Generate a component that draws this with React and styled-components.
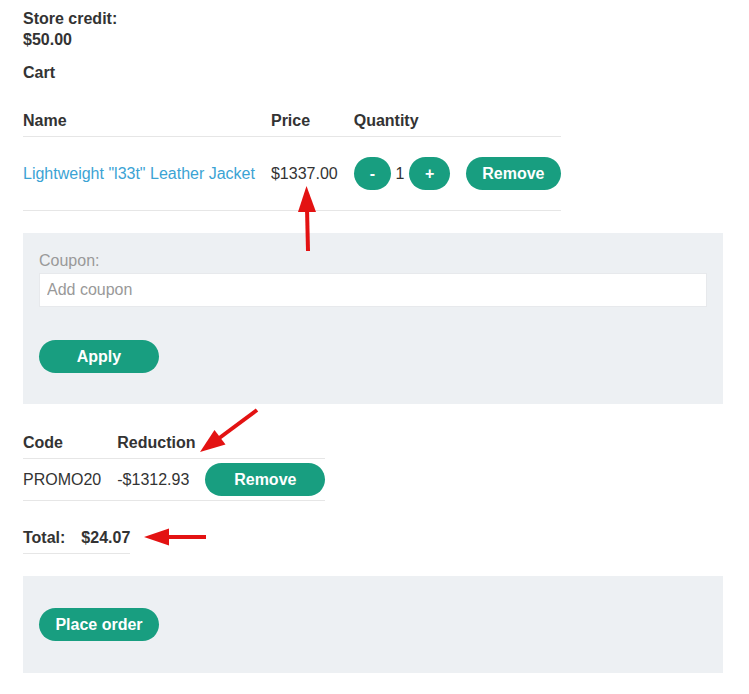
import styled, { createGlobalStyle } from "styled-components";

const GlobalStyle = createGlobalStyle`
    body {
        margin: 0;
        background: #ffffff;
        font-family: "Liberation Sans", Arial, sans-serif;
        font-size: 16px;
        color: #333333;
    }
`;

const Page = styled.div`
    position: relative;
    padding: 8px 26px 22px 23px;
    line-height: 21px;
`;

const Credit = styled.div`
    font-weight: 700;
`;

const Heading = styled.div`
    margin-top: 12px;
    font-weight: 700;
`;

const Table = styled.table`
    border-collapse: collapse;
    margin-top: ${(p) => p.$top || 19}px;
`;

const Th = styled.th`
    padding: 8px 8px 5px 0;
    text-align: left;
    font-weight: 700;
    white-space: nowrap;

    &:last-child {
        padding-right: 0;
    }
`;

const Tr = styled.tr`
    border-bottom: 1px solid #e6e6e6;
`;

const Td = styled.td`
    padding: ${(p) => p.$pad || 5}px 16px ${(p) => p.$pad || 5}px 0;
    vertical-align: middle;
    white-space: nowrap;
    font-weight: ${(p) => (p.$bold ? 700 : 400)};

    &:last-child {
        padding-right: 0;
    }
`;

const ProductLink = styled.a`
    color: #3ba3d4;
    text-decoration: none;
`;

const Button = styled.button`
    display: inline-flex;
    align-items: center;
    justify-content: center;
    vertical-align: middle;
    height: 33px;
    min-width: ${(p) => p.$width || 0}px;
    padding: 0 16px;
    border: none;
    border-radius: 17px;
    background: #189e80;
    color: #ffffff;
    font-family: inherit;
    font-size: 16px;
    font-weight: 700;
    cursor: pointer;
`;

const Qty = styled.div`
    display: flex;
    align-items: center;
    gap: 4.5px;
`;

const Panel = styled.div`
    background: #edf0f3;
    width: 700px;
    box-sizing: border-box;
    margin-top: ${(p) => p.$top}px;
    padding: ${(p) => (p.$roomy ? "32px 16px 32px" : "16px 16px 31px")};
`;

const Label = styled.label`
    display: block;
    color: #999999;
    line-height: 24px;
`;

const Input = styled.input`
    display: block;
    width: 100%;
    height: 34px;
    box-sizing: border-box;
    padding: 0 7px;
    border: 1px solid #e7e9ec;
    background: #ffffff;
    font-family: inherit;
    font-size: 16px;
    color: #333333;

    &::placeholder {
        color: #999999;
    }
`;

const FormActions = styled.div`
    margin-top: 33px;
`;

const Notes = styled.svg`
    position: absolute;
    top: 0;
    left: 0;
    pointer-events: none;
`;

const Arrows = () => (
    <Notes width="749" height="694" viewBox="0 0 749 694">
        <g stroke="#e31212" strokeWidth="4" fill="#e31212">
            <line x1="308" y1="251" x2="307" y2="208" />
            <line x1="257" y1="410" x2="218" y2="439" />
            <line x1="206" y1="537" x2="166" y2="537" />
        </g>
        <g fill="#e31212">
            <polygon points="306.5,186 298,212 316,212" />
            <polygon points="200,452 214.5,430 225.5,444.5" />
            <polygon points="144,537 169,528.5 169,545.5" />
        </g>
    </Notes>
);

export default function App() {
    return (
        <>
            <GlobalStyle />
            <Page>
                <Credit>
                    Store credit:
                    <br />
                    $50.00
                </Credit>
                <Heading>Cart</Heading>

                <Table>
                    <thead>
                        <Tr>
                            <Th>Name</Th>
                            <Th>Price</Th>
                            <Th>Quantity</Th>
                            <Th />
                        </Tr>
                    </thead>
                    <tbody>
                        <Tr>
                            <Td $pad={20}>
                                <ProductLink href="#">Lightweight "l33t" Leather Jacket</ProductLink>
                            </Td>
                            <Td $pad={20}>$1337.00</Td>
                            <Td $pad={20}>
                                <Qty>
                                    <Button>-</Button>
                                    <span>1</span>
                                    <Button>+</Button>
                                </Qty>
                            </Td>
                            <Td $pad={20}>
                                <Button>Remove</Button>
                            </Td>
                        </Tr>
                    </tbody>
                </Table>

                <Panel $top={22}>
                    <Label htmlFor="coupon">Coupon:</Label>
                    <Input id="coupon" placeholder="Add coupon" />
                    <FormActions>
                        <Button $width={120}>Apply</Button>
                    </FormActions>
                </Panel>

                <Table $top={20}>
                    <thead>
                        <Tr>
                            <Th>Code</Th>
                            <Th>Reduction</Th>
                            <Th />
                        </Tr>
                    </thead>
                    <tbody>
                        <Tr>
                            <Td $pad={4}>PROMO20</Td>
                            <Td $pad={4}>-$1312.93</Td>
                            <Td $pad={4}>
                                <Button $width={120}>Remove</Button>
                            </Td>
                        </Tr>
                    </tbody>
                </Table>

                <Table $top={21}>
                    <tbody>
                        <Tr>
                            <Td $bold>Total:</Td>
                            <Td $bold>$24.07</Td>
                        </Tr>
                    </tbody>
                </Table>

                <Panel $top={22} $roomy>
                    <Button $width={120}>Place order</Button>
                </Panel>

                <Arrows />
            </Page>
        </>
    );
}
